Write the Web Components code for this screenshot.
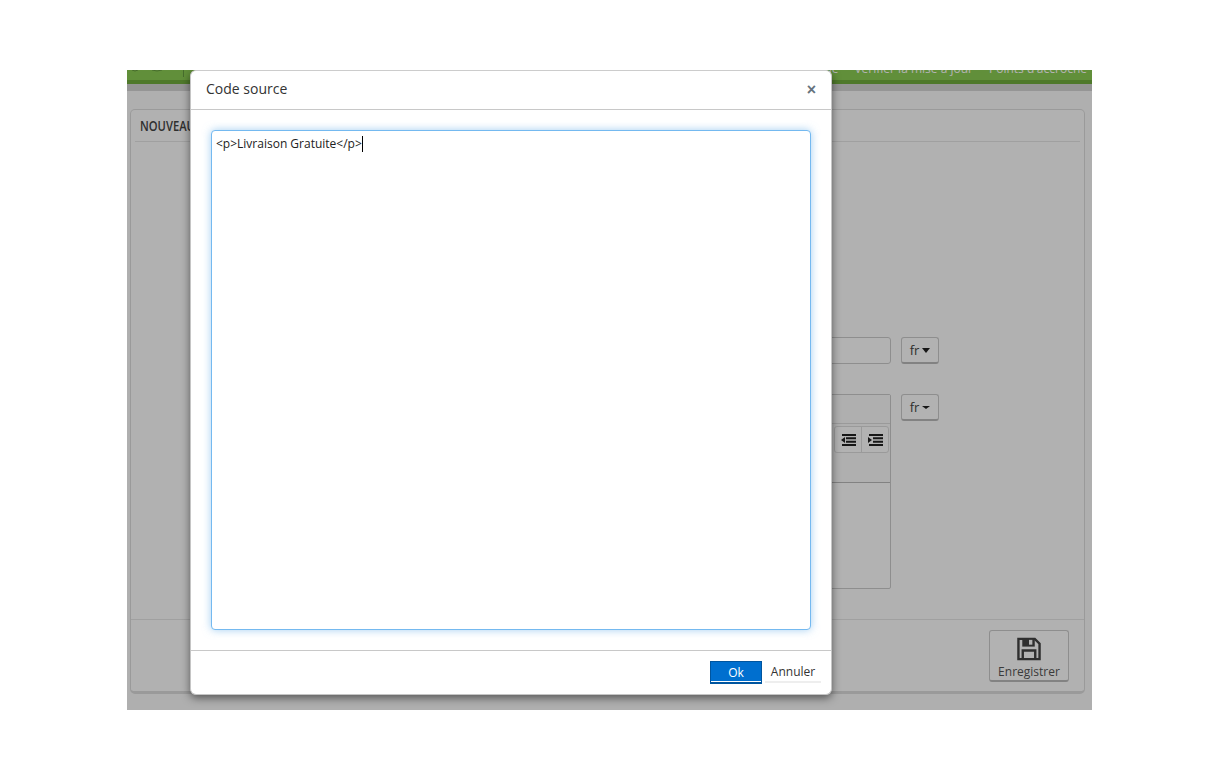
<!DOCTYPE html>
<html lang="fr">
<head>
<meta charset="utf-8">
<title>Code source</title>
<style>
	html, body { margin: 0; background: #fff; }
	body { padding: 70px 0 0 127px; font-family: "Open Sans", sans-serif; color: #333; }
</style>
</head>
<body>
<app-page>
	<source-dialog title-text="Code source">&lt;p&gt;Livraison Gratuite&lt;/p&gt;</source-dialog>
</app-page>

<script>
class TopBar extends HTMLElement {
	constructor() {
		super();
		this.attachShadow({ mode: "open" });
		this.shadowRoot.innerHTML = `
		<style>
			:host {
				display: flex;
				gap: 16px;
				height: 10px;
				padding-right: 5px;
				overflow: hidden;
				background: #8ccd53;
				border-bottom: 4px solid #71ae3e;
				box-shadow: 0 7px 0 #d6d6d6;
				font-size: 12px;
				line-height: 16px;
				color: #fff;
				white-space: nowrap;
			}
			svg { display: block; width: 60px; height: 10px; margin-right: auto; flex: none; }
			span { margin-top: -9px; }
		</style>
		<svg viewBox="0 0 60 10" fill="none" stroke="#56883a" stroke-width=".7">
			<path d="M5 0q3 2 6 0M25 0q5 2 10 0"/>
			<path d="M56.500 0v7"/>
		</svg>
		<span>Sauvegarde</span>
		<span>Vérifier la mise à jour</span>
		<span>Points d'accroche</span>
	`;
	}
}

class LangButton extends HTMLElement {
	constructor() {
		super();
		this.attachShadow({ mode: "open" });
		const drop = this.getAttribute("caret") || 4;
		this.shadowRoot.innerHTML = `
		<style>
			:host {
				display: flex;
				align-items: center;
				justify-content: center;
				gap: 3px;
				box-sizing: border-box;
				width: 38px;
				height: 27px;
				background: #fff;
				border: 1px solid #ccc;
				border-bottom: 2px solid #bbb;
				border-radius: 3px;
				font-size: 13px;
				color: #444;
			}
			i { border: 4px solid transparent; border-top: ${drop}px solid #222; border-bottom: 0; }
		</style>
		fr<i></i>
	`;
	}
}

class EditorBox extends HTMLElement {
	constructor() {
		super();
		this.attachShadow({ mode: "open" });
		this.shadowRoot.innerHTML = `
		<style>
			:host {
				display: block;
				box-sizing: border-box;
				height: 195px;
				background: #fff;
				border: 1px solid #ccc;
				border-radius: 2px;
			}
			.head { height: 28px; background: #fbfbfb; border-bottom: 1px solid #ddd; }
			.tools {
				display: flex;
				justify-content: flex-end;
				height: 59px;
				box-sizing: border-box;
				padding: 2px 1px 0 0;
				background: #fbfbfb;
				border-bottom: 1px solid #bbb;
			}
			.group { display: flex; height: 25px; border: 1px solid #ddd; border-radius: 3px; background: #fff; }
			.group b { display: flex; align-items: center; justify-content: center; width: 26px; }
			.group b + b { border-left: 1px solid #ddd; }
			svg { display: block; width: 15px; height: 12px; fill: #222; }
		</style>
		<div class="head"></div>
		<div class="tools">
			<div class="group">
				<b><svg viewBox="0 0 15 12"><path d="M1 0h14v2H1zM5 3.300h10v2H5zM5 6.700h10v2H5zM1 10h14v2H1zM4 3v6L0 6z"/></svg></b>
				<b><svg viewBox="0 0 15 12"><path d="M1 0h14v2H1zM5 3.300h10v2H5zM5 6.700h10v2H5zM1 10h14v2H1zM0 3v6l4-3z"/></svg></b>
			</div>
		</div>
	`;
	}
}

class SaveButton extends HTMLElement {
	constructor() {
		super();
		this.attachShadow({ mode: "open" });
		this.shadowRoot.innerHTML = `
		<style>
			:host {
				display: flex;
				flex-direction: column;
				align-items: center;
				box-sizing: border-box;
				width: 80px;
				height: 52px;
				padding-top: 6px;
				background: #fff;
				border: 1px solid #ccc;
				border-bottom: 2px solid #bbb;
				border-radius: 3px;
				font-size: 12px;
				line-height: 16px;
				color: #555;
			}
			svg { display: block; width: 26px; height: 25px; margin-bottom: 3px; }
		</style>
		<svg viewBox="0 0 26 25" fill="none" stroke="#444" stroke-width="2.500">
			<path d="M2 2h17l5 5v16H2z"/>
			<path d="M6.500 23v-9h13v9"/>
			<path d="M6 2h13v8H6z" fill="#444" stroke="none"/>
			<path d="M13 3h3.500v5H13z" fill="#fff" stroke="none"/>
		</svg>
		Enregistrer
	`;
	}
}

class AppPage extends HTMLElement {
	constructor() {
		super();
		this.attachShadow({ mode: "open" });
		this.shadowRoot.innerHTML = `
		<style>
			:host {
				display: block;
				position: relative;
				width: 965px;
				height: 640px;
				overflow: hidden;
				background: #fbfbfb;
			}
			.panel {
				display: flex;
				flex-direction: column;
				box-sizing: border-box;
				width: 955px;
				height: 585px;
				margin: 25px 0 0 3px;
				background: #fefefe;
				border: 1px solid #ddd;
				border-bottom: 3px solid #ddd;
				border-radius: 5px;
			}
			h1 {
				flex: none;
				margin: 0 4px;
				height: 32px;
				padding: 4px 0 0 5px;
				box-sizing: border-box;
				border-bottom: 1px solid #e6e6e6;
				font: 600 14px/24px "Open Sans", sans-serif;
				color: #444;
			}
			h1 span { display: inline-block; transform: scaleX(.8); transform-origin: 0 50%; }
			.body {
				flex: 1;
				display: grid;
				grid-template-columns: 1fr 38px;
				grid-template-rows: 27px 195px;
				column-gap: 10px;
				row-gap: 30px;
				align-content: start;
				padding: 195px 145px 0 100px;
			}
			.field { box-sizing: border-box; background: #fff; border: 1px solid #ccc; border-radius: 3px; }
			.foot {
				flex: none;
				display: flex;
				justify-content: flex-end;
				height: 72px;
				box-sizing: border-box;
				padding: 10px 15px 0 0;
				border-top: 1px solid #e6e6e6;
			}
			lang-button { align-self: start; }
			.overlay { position: absolute; inset: 0; background: rgba(0, 0, 0, .3); }
			::slotted(source-dialog) { position: absolute; left: 63px; top: 0; }
		</style>
		<top-bar></top-bar>
		<div class="panel">
			<h1><span>NOUVEAU</span></h1>
			<div class="body">
				<div class="field"></div>
				<lang-button caret="5"></lang-button>
				<editor-box></editor-box>
				<lang-button caret="3"></lang-button>
			</div>
			<div class="foot"><save-button></save-button></div>
		</div>
		<div class="overlay"></div>
		<slot></slot>
	`;
	}
}

class SourceDialog extends HTMLElement {
	constructor() {
		super();
		this.attachShadow({ mode: "open" });
		this.shadowRoot.innerHTML = `
		<style>
			:host {
				display: flex;
				flex-direction: column;
				box-sizing: border-box;
				width: 642px;
				height: 625px;
				background: #fff;
				border: 1px solid #c5c5c5;
				border-top-color: #ccc;
				border-radius: 6px;
				box-shadow: 0 3px 9px rgba(0, 0, 0, .5);
				color: #333;
			}
			header {
				display: flex;
				align-items: center;
				justify-content: space-between;
				flex: none;
				height: 38px;
				box-sizing: content-box;
				padding: 0 15px;
				border-bottom: 1px solid #c8c8c8;
				font-size: 14px;
				line-height: 36px;
			}
			header span:first-child { margin-top: -2px; }
			.close { font: 700 16px/1 "Liberation Sans", sans-serif; color: #66727d; }
			main { flex: 1; padding: 20px; }
			.code {
				box-sizing: border-box;
				height: 100%;
				padding: 5px 4px;
				background: #fff;
				border: 1px solid #74b9f0;
				border-radius: 4px;
				box-shadow: 0 0 8px rgba(102, 175, 233, .6);
				font-size: 12px;
				line-height: 16px;
				color: #222;
			}
			.caret { display: inline-block; width: 1px; height: 16px; background: #000; vertical-align: top; }
			footer {
				display: flex;
				justify-content: flex-end;
				gap: 3px;
				flex: none;
				height: 44px;
				box-sizing: border-box;
				padding: 10px 10px 0 0;
				border-top: 1px solid #c8c8c8;
				font-size: 12px;
			}
			.btn { display: flex; align-items: center; justify-content: center; box-sizing: border-box; height: 23px; }
			.ok { width: 52px; padding-top: 1px; background: #006fcf; border: 1px solid #00559f; border-bottom: 2px solid #00559f; box-shadow: inset 0 -1px 0 #fff; color: #fff; }
			.cancel { width: 56px; height: 22px; padding-top: 1px; border-bottom: 2px solid #eee; color: #333; }
		</style>
		<header>
			<span></span>
			<span class="close">×</span>
		</header>
		<main><div class="code"><slot></slot><span class="caret"></span></div></main>
		<footer>
			<div class="btn ok">Ok</div>
			<div class="btn cancel">Annuler</div>
		</footer>
	`;
		this.shadowRoot.querySelector("header span").textContent = this.getAttribute("title-text") || "";
	}
}

window.customElements.define("top-bar", TopBar);
window.customElements.define("lang-button", LangButton);
window.customElements.define("editor-box", EditorBox);
window.customElements.define("save-button", SaveButton);
window.customElements.define("app-page", AppPage);
window.customElements.define("source-dialog", SourceDialog);
</script>
</body>
</html>
